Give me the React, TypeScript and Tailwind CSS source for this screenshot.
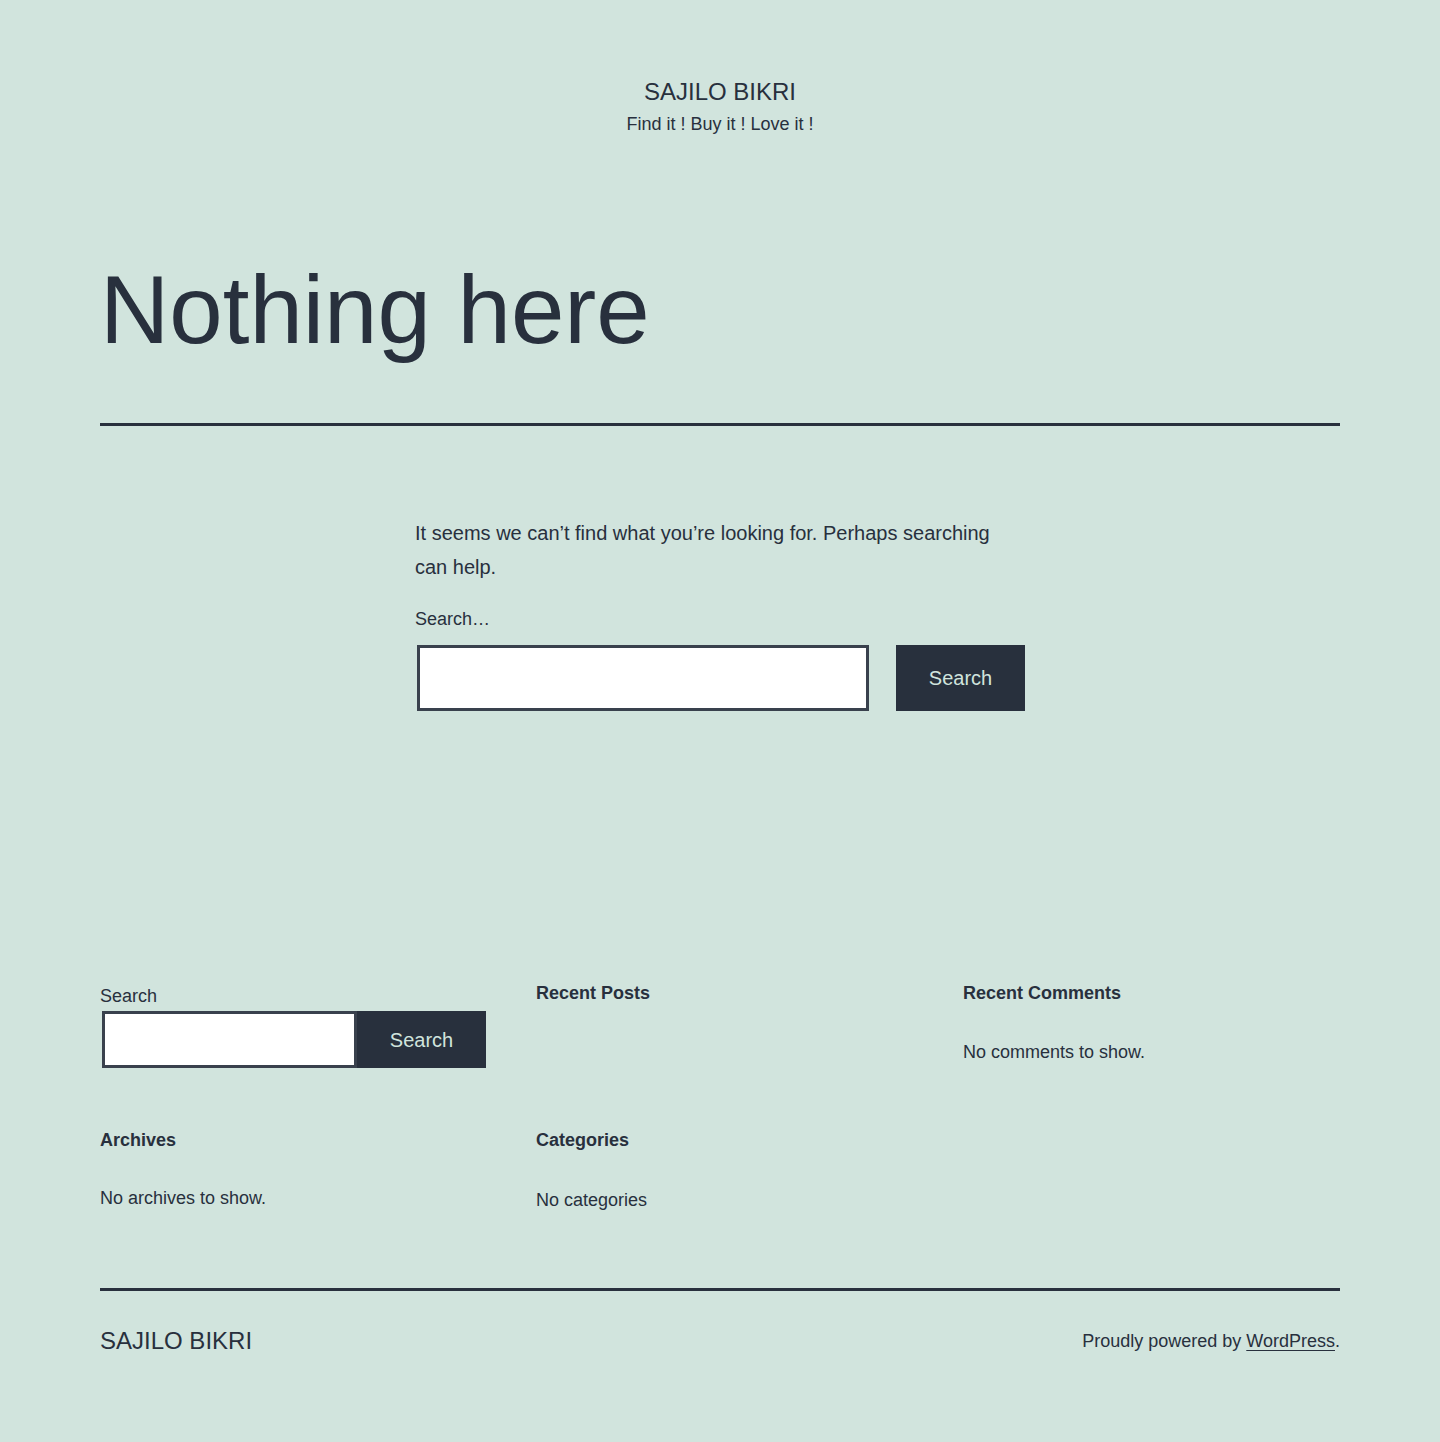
import React from "react";

const font = { fontFamily: '"Liberation Sans", Arial, sans-serif' };

function SearchBox({
  inputWidth,
  height,
  gap,
}: {
  inputWidth: string;
  height: string;
  gap: string;
}) {
  return (
    <div className="flex">
      <input
        type="search"
        aria-label="Search"
        className={`ml-[2px] shrink-0 ${inputWidth} ${height} border-[3px] border-[#39414d] bg-white outline-none`}
      />
      <button
        className={`${gap} shrink-0 w-[129px] ${height} bg-[#28303d] text-[20px] text-[#d1e4dd]`}
      >
        Search
      </button>
    </div>
  );
}

export default function App() {
  return (
    <div
      className="min-h-screen bg-[#d1e4dd] text-[#28303d] pb-[86px]"
      style={font}
    >
      {/* Header */}
      <header className="flex flex-col items-center pt-[77px]">
        <p className="text-[24px] leading-[30px] uppercase">Sajilo Bikri</p>
        <p className="mt-[5px] text-[18px] leading-[24px]">
          Find it ! Buy it ! Love it !
        </p>
      </header>

      <main className="mx-[100px]">
        <h1 className="mt-[121px] text-[96px] leading-[106px]">
          Nothing here
        </h1>
        <div className="mt-[60px] h-[3px] bg-[#28303d]" />

        <div className="mx-auto w-[610px] mt-[90px]">
          <p className="text-[20px] leading-[34px]">
            It seems we can’t find what you’re looking for. Perhaps searching
            can help.
          </p>
          <label className="block mt-[23px] text-[18px] leading-[24px]">
            Search…
          </label>
          <div className="mt-[14px]">
            <SearchBox inputWidth="w-[452px]" height="h-[66px]" gap="ml-[27px]" />
          </div>
        </div>
      </main>

      {/* Widgets */}
      <section className="mx-[100px] mt-[270px] grid grid-cols-[386px_377px_1fr] gap-x-[50px] gap-y-[60px]">
        <div className="pt-[3px]">
          <label className="block text-[18px] leading-[24px]">Search</label>
          <div className="mt-[3px]">
            <SearchBox inputWidth="w-[255px]" height="h-[57px]" gap="" />
          </div>
        </div>
        <div>
          <h2 className="text-[18px] leading-[24px] font-bold">Recent Posts</h2>
        </div>
        <div>
          <h2 className="text-[18px] leading-[24px] font-bold">
            Recent Comments
          </h2>
          <p className="mt-[35px] text-[18px] leading-[24px]">
            No comments to show.
          </p>
        </div>
        <div>
          <h2 className="text-[18px] leading-[24px] font-bold">Archives</h2>
          <p className="mt-[34px] text-[18px] leading-[24px]">
            No archives to show.
          </p>
        </div>
        <div>
          <h2 className="text-[18px] leading-[24px] font-bold">Categories</h2>
          <ul className="mt-[36px] text-[18px] leading-[24px]">
            <li>No categories</li>
          </ul>
        </div>
        <div />
      </section>

      {/* Footer */}
      <footer className="mx-[100px] mt-[76px]">
        <div className="h-[3px] bg-[#28303d]" />
        <div className="mt-[35px] flex items-start justify-between">
          <p className="text-[24px] leading-[30px] uppercase">Sajilo Bikri</p>
          <p className="mt-[3px] text-[18px] leading-[24px]">
            Proudly powered by{" "}
            <a href="#" className="underline underline-offset-[3px]">
              WordPress
            </a>
            .
          </p>
        </div>
      </footer>
    </div>
  );
}
